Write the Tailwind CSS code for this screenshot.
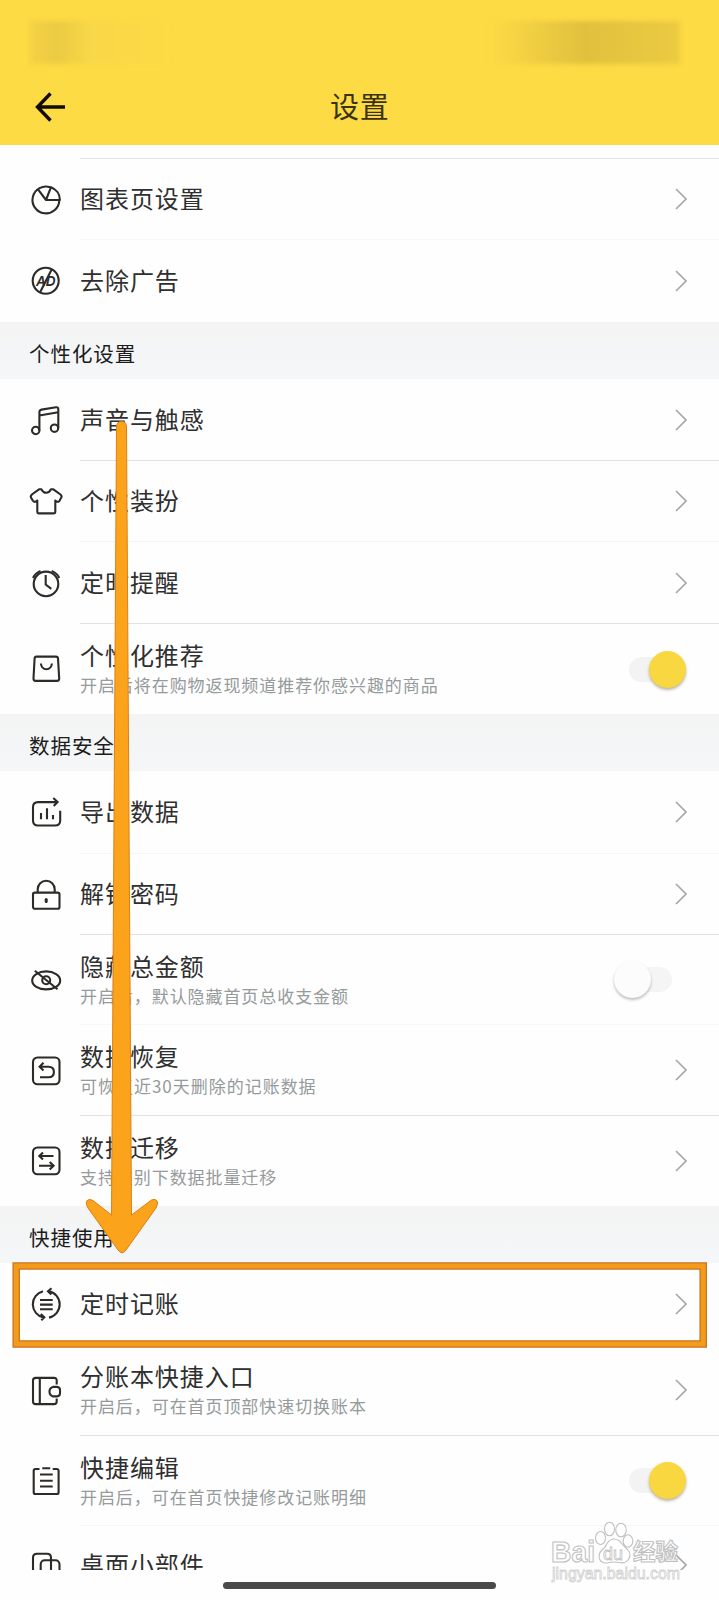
<!DOCTYPE html>
<html lang="zh-CN">
<head>
<meta charset="utf-8">
<title>设置</title>
<script src="https://cdn.jsdelivr.net/npm/@tailwindcss/browser@4"></script>
</head>
<body class="bg-white">
<svg class="hidden">
  <symbol id="chev" viewBox="0 0 12 22"><path d="M1 1L11 11L1 21" fill="none" stroke="#a6a6a6" stroke-width="1.6"/></symbol>
</svg>
<div class="relative flex h-[1600px] w-[719px] flex-col overflow-hidden bg-[#fefefe] font-['Noto_Sans_CJK_SC',sans-serif] text-[#2f2f2f]">
  <header class="flex h-[145px] shrink-0 flex-col bg-[#fddb45]">
    <div class="flex h-[64px] items-end justify-between pr-[39px] pl-[30px]">
      <div class="flex h-[43px] w-[140px] blur-[2px]">
        <div class="w-[28px] bg-linear-to-r from-[#f4d245] to-[#ebcb43]"></div>
        <div class="w-[32px] bg-linear-to-r from-[#ebcb43] to-[#f8d748]"></div>
        <div class="w-[80px] bg-linear-to-r from-[#f8d748] to-[#fddb45]"></div>
      </div>
      <div class="h-[43px] w-[190px] bg-linear-to-r from-[#fddb45] via-[#e1c03e] via-50% to-[#eccb42] blur-[2px]"></div>
    </div>
    <div class="flex h-[81px] items-center pt-px pl-[35px]">
      <svg class="mt-[4px] h-[30px] w-[30px] shrink-0" viewBox="0 0 30 30" fill="none" stroke="#120c00" stroke-width="3.400"><path d="M15.500 1.500L2.500 15L15.500 28.500M2.500 15H30"/></svg>
      <h1 class="ml-[265px] shrink-0 text-[29px] leading-[40px] tracking-[0.8px] text-[#3b320f]">设置</h1>
    </div>
  </header>

  <main class="flex h-[1425px] shrink-0 flex-col overflow-hidden text-[24px] tracking-[0.95px] [&_span]:-translate-y-px [&_span]:block">
    <div class="ml-[80px] h-[14px] shrink-0 border-b border-[#e4e4e4]"></div>

    <div class="flex h-[81px] shrink-0 pl-[30px]">
      <svg class="h-8 w-8 shrink-0 self-center overflow-visible" viewBox="0 0 32 32" fill="none" stroke="#2d2b28" stroke-width="2.100" stroke-linejoin="round"><path d="M20.500 3.400A13.400 13.400 0 1 0 29.300 16M16 16L8 5.400M16 16L21 3.200A13.600 13.600 0 0 1 29.900 16Z"/></svg>
      <div class="ml-[18px] flex flex-1 items-center justify-between border-b border-[#f6f6f6] pr-[32px]"><span>图表页设置</span><svg class="h-[22px] w-3"><use href="#chev"/></svg></div>
    </div>
    <div class="flex h-[82px] shrink-0 pl-[30px]">
      <svg class="h-8 w-8 shrink-0 self-center overflow-visible" viewBox="0 0 32 32" fill="none" stroke="#2d2b28" stroke-width="2.100"><circle cx="15.700" cy="15.700" r="13"/><path d="M21.800 4.200L10 27.400"/><text x="6" y="20.600" font-family="Liberation Sans" font-size="14" font-weight="bold" font-style="italic" letter-spacing="0" textLength="19.500" lengthAdjust="spacingAndGlyphs" fill="#2d2b28" stroke="none">AD</text></svg>
      <div class="ml-[18px] flex flex-1 items-center justify-between pr-[32px]"><span>去除广告</span><svg class="h-[22px] w-3"><use href="#chev"/></svg></div>
    </div>

    <h2 class="flex h-[57px] shrink-0 items-center bg-linear-to-b from-[#f4f4f4] to-[#f4f6f8] pt-[6px] pl-[29px] text-[20.500px] text-[#1c1c1c]">个性化设置</h2>

    <div class="flex h-[82px] shrink-0 pl-[30px]">
      <svg class="h-8 w-8 shrink-0 self-center overflow-visible" viewBox="0 0 32 32" fill="none" stroke="#2d2b28" stroke-width="2.100" stroke-linejoin="round"><circle cx="5.700" cy="26.500" r="3.700"/><circle cx="24.500" cy="24.200" r="3.700"/><path d="M9.400 26.500V8Q9.400 6 11.500 5.600L26 3.200Q28.300 3 28.300 5V24M9.400 11.500L28.300 8.200"/></svg>
      <div class="ml-[18px] flex flex-1 items-center justify-between border-b border-[#e2e2e2] pr-[32px]"><span>声音与触感</span><svg class="h-[22px] w-3"><use href="#chev"/></svg></div>
    </div>
    <div class="flex h-[81px] shrink-0 pl-[30px]">
      <svg class="h-8 w-8 shrink-0 self-center overflow-visible" viewBox="0 0 32 32" fill="none" stroke="#2d2b28" stroke-width="2.100" stroke-linejoin="round"><path d="M9 3.300H11.500Q13 6.800 16.200 6.800T21 3.300H23.400L30.500 8.500Q32.400 10.300 31 12.100L29.500 14.800Q27.800 17 25.300 14.500V26Q25.300 27.400 24 27.400H8.600Q7.300 27.400 7.300 26V14.500Q4.800 17 3 14.800L1.300 12.100Q0 10.300 1.900 8.500Z"/></svg>
      <div class="ml-[18px] flex flex-1 items-center justify-between border-b border-[#f4f4f4] pr-[32px]"><span>个性装扮</span><svg class="h-[22px] w-3"><use href="#chev"/></svg></div>
    </div>
    <div class="flex h-[82px] shrink-0 pl-[30px]">
      <svg class="h-8 w-8 shrink-0 self-center overflow-visible" viewBox="0 0 32 32" fill="none" stroke="#2d2b28" stroke-width="2.100"><circle cx="16" cy="16.900" r="12.300"/><path d="M15.700 8V17.500L21.300 21.900M3 11Q5 6.200 10.500 3.900M29.300 11Q27.200 6.200 21.700 3.900"/></svg>
      <div class="ml-[18px] flex flex-1 items-center justify-between border-b border-[#e2e2e2] pr-[32px]"><span>定时提醒</span><svg class="h-[22px] w-3"><use href="#chev"/></svg></div>
    </div>
    <div class="flex h-[90px] shrink-0 pl-[30px]">
      <svg class="h-8 w-8 shrink-0 self-center overflow-visible" viewBox="0 0 32 32" fill="none" stroke="#2d2b28" stroke-width="2.100"><path d="M6.500 3.600H26Q27.900 3.600 28 5.500L29.200 25.500Q29.200 27.900 27 27.900H5.500Q3.500 27.900 3.500 25.500L4.600 5.500Q4.700 3.600 6.500 3.600ZM10.900 10.500Q11.500 16.200 16.400 16.200T21.900 10.500"/></svg>
      <div class="ml-[18px] flex flex-1 items-center justify-between pr-[33px]">
        <div class="flex flex-col gap-px"><span class="leading-[32px]">个性化推荐</span><span class="text-[17px] leading-[25px] tracking-[0.93px] text-[#959a9b]">开启后将在购物返现频道推荐你感兴趣的商品</span></div>
        <div class="flex h-[25px] w-[57px] items-center justify-end rounded-full bg-[#f3f3f3]"><div class="h-[37px] w-[37px] shrink-0 rounded-full bg-[#f9d740] shadow-[0_2px_3px_rgba(90,70,20,0.4)]"></div></div>
      </div>
    </div>

    <h2 class="flex h-[57px] shrink-0 items-center bg-linear-to-b from-[#f4f4f4] to-[#f4f6f8] pt-[6px] pl-[29px] text-[20.500px] text-[#1c1c1c]">数据安全</h2>

    <div class="flex h-[83px] shrink-0 pl-[30px]">
      <svg class="h-8 w-8 shrink-0 self-center overflow-visible" viewBox="0 0 32 32" fill="none" stroke="#2d2b28" stroke-width="2.100"><path d="M27.500 5.100H8Q3 5.100 3 10.100V23.500Q3 28.500 8 28.500H25Q30.200 28.500 30.200 23.500V13.800M23.300 1L27.600 5.100L23.700 9.100M11 16V22.200M17 11.200V22.200M23 18V22.200"/></svg>
      <div class="ml-[18px] flex flex-1 items-center justify-between border-b border-[#f6f6f6] pr-[32px]"><span>导出数据</span><svg class="h-[22px] w-3"><use href="#chev"/></svg></div>
    </div>
    <div class="flex h-[81px] shrink-0 pl-[30px]">
      <svg class="h-8 w-8 shrink-0 self-center overflow-visible" viewBox="0 0 32 32" fill="none" stroke="#2d2b28" stroke-width="2.100"><rect x="3" y="13.600" width="26.500" height="16.200" rx="1.800"/><path d="M7.700 13.600V10.300A8.500 8.500 0 0 1 24.700 10.300V13.600"/><path d="M16.200 20.500V22.500" stroke-width="3" stroke-linecap="round"/></svg>
      <div class="ml-[18px] flex flex-1 items-center justify-between border-b border-[#e2e2e2] pr-[32px]"><span>解锁密码</span><svg class="h-[22px] w-3"><use href="#chev"/></svg></div>
    </div>
    <div class="flex h-[90px] shrink-0 pl-[30px]">
      <svg class="h-8 w-8 shrink-0 self-center overflow-visible" viewBox="0 0 32 32" fill="none" stroke="#2d2b28" stroke-width="2.100"><ellipse cx="16.200" cy="16.400" rx="14" ry="9"/><circle cx="16.200" cy="16.200" r="4"/><path d="M4.800 6.700L27.500 25.300"/></svg>
      <div class="ml-[18px] flex flex-1 items-center justify-between border-b border-[#f8f8f8] pr-[47px]">
        <div class="flex flex-col gap-px"><span class="leading-[32px]">隐藏总金额</span><span class="text-[17px] leading-[25px] tracking-[0.93px] text-[#959a9b]">开启后，默认隐藏首页总收支金额</span></div>
        <div class="flex h-[25px] w-[58px] items-center rounded-full bg-[#f5f5f5]"><div class="h-[37px] w-[37px] shrink-0 rounded-full bg-[#fcfcfc] shadow-[0_2px_3px_rgba(0,0,0,0.25)]"></div></div>
      </div>
    </div>
    <div class="flex h-[91px] shrink-0 pl-[30px]">
      <svg class="h-8 w-8 shrink-0 self-center overflow-visible" viewBox="0 0 32 32" fill="none" stroke="#2d2b28" stroke-width="2.100"><rect x="3" y="2.500" width="26.500" height="26.800" rx="4.500"/><path d="M13.500 7.800L9.600 11.700L13.500 15.500M9.600 11.700H18.500Q23.900 11.700 23.900 17T18.500 22.300H10"/></svg>
      <div class="ml-[18px] flex flex-1 items-center justify-between border-b border-[#e2e2e2] pr-[32px]">
        <div class="flex flex-col gap-px"><span class="leading-[32px]">数据恢复</span><span class="text-[17px] leading-[25px] tracking-[0.98px] text-[#959a9b]">可恢复近30天删除的记账数据</span></div>
        <svg class="h-[22px] w-3"><use href="#chev"/></svg>
      </div>
    </div>
    <div class="flex h-[90px] shrink-0 pl-[30px]">
      <svg class="h-8 w-8 shrink-0 self-center overflow-visible" viewBox="0 0 32 32" fill="none" stroke="#2d2b28" stroke-width="2.100"><rect x="3" y="2.500" width="26.500" height="26.800" rx="4.500"/><path d="M13 7.500L9.300 11L13 14.500M9.300 11H23.500M9 20.700H23.500M19.700 17L23.600 20.700L19.700 24.500"/></svg>
      <div class="ml-[18px] flex flex-1 items-center justify-between pr-[32px]">
        <div class="flex flex-col gap-px"><span class="leading-[32px]">数据迁移</span><span class="text-[17px] leading-[25px] tracking-[0.93px] text-[#959a9b]">支持类别下数据批量迁移</span></div>
        <svg class="h-[22px] w-3"><use href="#chev"/></svg>
      </div>
    </div>

    <h2 class="flex h-[57px] shrink-0 items-center bg-linear-to-b from-[#f4f4f4] to-[#f4f6f8] pt-[6px] pl-[29px] text-[20.500px] text-[#1c1c1c]">快捷使用</h2>

    <div class="flex h-[82px] shrink-0 pl-[30px]">
      <svg class="h-8 w-8 shrink-0 self-center overflow-visible" viewBox="0 0 32 32" fill="none" stroke="#2d2b28" stroke-width="2.100"><path d="M13 3.200A13.500 13.500 0 0 0 13.500 29.500M19 29.600A13.500 13.500 0 0 0 18.500 3.100M21.500 .3L18 3.200L21.300 6.500M10.800 26L14.300 29.300L11.300 32.300M10 12H22.700M10 16.600H22.700M10 21.200H22.700"/></svg>
      <div class="ml-[18px] flex flex-1 items-center justify-between pr-[32px]"><span>定时记账</span><svg class="h-[22px] w-3"><use href="#chev"/></svg></div>
    </div>
    <div class="flex h-[91px] shrink-0 pl-[30px]">
      <svg class="h-8 w-8 shrink-0 self-center overflow-visible" viewBox="0 0 32 32" fill="none" stroke="#2d2b28" stroke-width="2.100"><path d="M26.700 9.500V5.500Q26.700 2.900 24 2.900H5.700Q3 2.900 3 5.500V26.500Q3 29.100 5.700 29.100H24Q26.700 29.100 26.700 26.500V23.500M9.800 2.900V29.100M23 11.900H27Q30 12.200 30 15V18.300Q30 21.200 27 21.400H23Q19.500 20.500 19.500 16.600T23 11.900Z"/></svg>
      <div class="ml-[18px] flex flex-1 items-center justify-between border-b border-[#e2e2e2] pr-[32px]">
        <div class="flex flex-col gap-px"><span class="leading-[32px]">分账本快捷入口</span><span class="text-[17px] leading-[25px] tracking-[0.93px] text-[#959a9b]">开启后，可在首页顶部快速切换账本</span></div>
        <svg class="h-[22px] w-3"><use href="#chev"/></svg>
      </div>
    </div>
    <div class="flex h-[90px] shrink-0 pl-[30px]">
      <svg class="h-8 w-8 shrink-0 self-center overflow-visible" viewBox="0 0 32 32" fill="none" stroke="#2d2b28" stroke-width="2.100"><path d="M9.500 4H5.500Q3.700 4 3.700 5.700V27.200Q3.700 29 5.500 29H26.800Q28.600 29 28.600 27.200V5.700Q28.600 4 26.800 4H22.700M12.300 3.300H20.200M10 9.500H22.700M10 15.700H22.700M10 21.500H22.700"/></svg>
      <div class="ml-[18px] flex flex-1 items-center justify-between border-b border-[#f6f6f6] pr-[33px]">
        <div class="flex flex-col gap-px"><span class="leading-[32px]">快捷编辑</span><span class="text-[17px] leading-[25px] tracking-[0.93px] text-[#959a9b]">开启后，可在首页快捷修改记账明细</span></div>
        <div class="flex h-[25px] w-[57px] items-center justify-end rounded-full bg-[#f3f3f3]"><div class="h-[37px] w-[37px] shrink-0 rounded-full bg-[#f9d740] shadow-[0_2px_3px_rgba(90,70,20,0.4)]"></div></div>
      </div>
    </div>
    <div class="flex h-[78px] shrink-0 pl-[30px]">
      <svg class="h-8 w-8 shrink-0 self-center overflow-visible" viewBox="0 0 32 32" fill="none" stroke="#2d2b28" stroke-width="2.100"><path d="M7 24Q3 24 3 20V8.700Q3 4.700 7 4.700H17Q21 4.700 21 8.700V24"/><rect x="10.700" y="11.200" width="18.800" height="18.800" rx="4"/></svg>
      <div class="ml-[18px] flex flex-1 items-center justify-between pr-[32px]"><span>桌面小部件</span><svg class="h-[22px] w-3"><use href="#chev"/></svg></div>
    </div>
  </main>

  <div class="mt-[12px] ml-[223px] h-[7px] w-[273px] shrink-0 rounded-full bg-[#4a4a4a]"></div>

  <!-- guide arrow, highlight frame and site watermark -->
  <svg class="absolute inset-0 h-[1600px] w-[719px]" viewBox="0 0 719 1600">
    <path d="M116.500 427Q116.500 421.500 121.500 421.500T126.500 427L131.500 1215L151.500 1200Q155.500 1198 157.500 1201.500Q158 1204 156 1208L126 1250Q122 1255.500 118 1250L88 1208Q85.500 1204 86.500 1201Q89 1198 93 1200.500L111.500 1215Z" fill="#fba31a" stroke="#df7f14" stroke-width="1" stroke-linejoin="round"/>
    <path d="M16.200 1266H703.200V1344H16.200Z" fill="none" stroke="#c9731b" stroke-width="7.500"/>
    <path d="M16.200 1266H703.200V1344H16.200Z" fill="none" stroke="#f39b1b" stroke-width="5"/>
    <g fill="#fff" stroke="#c0c0c0" stroke-width="1.100">
      <text x="551" y="1562" font-family="Liberation Sans" font-size="30" font-weight="bold" textLength="44" lengthAdjust="spacingAndGlyphs">Bai</text>
      <ellipse cx="600.500" cy="1538" rx="5" ry="6.500"/><ellipse cx="609.500" cy="1529" rx="5" ry="6.800"/><ellipse cx="621" cy="1530" rx="5.200" ry="6.800"/><ellipse cx="628" cy="1541" rx="4.800" ry="6.300"/>
      <path d="M614 1539Q619 1539 623 1545L628 1550Q632 1555 628 1560Q625 1564 619 1562.500Q614 1561.500 609 1562.500Q602 1564.500 599.500 1559Q598 1554 602 1550Q605 1548 607 1543.500Q610 1539 614 1539Z"/>
      <text x="603" y="1560" font-family="Liberation Sans" font-size="19" textLength="20" lengthAdjust="spacingAndGlyphs" stroke-width=".8">du</text>
      <text x="633" y="1560" font-family="Noto Sans CJK SC" font-weight="bold" font-size="23" textLength="45" lengthAdjust="spacingAndGlyphs">经验</text>
      <text x="552" y="1579" font-family="Liberation Sans" font-size="16" textLength="128" lengthAdjust="spacingAndGlyphs" stroke="#d0d0d0" stroke-width=".8">jingyan.baidu.com</text>
    </g>
  </svg>
</div>
</body>
</html>
